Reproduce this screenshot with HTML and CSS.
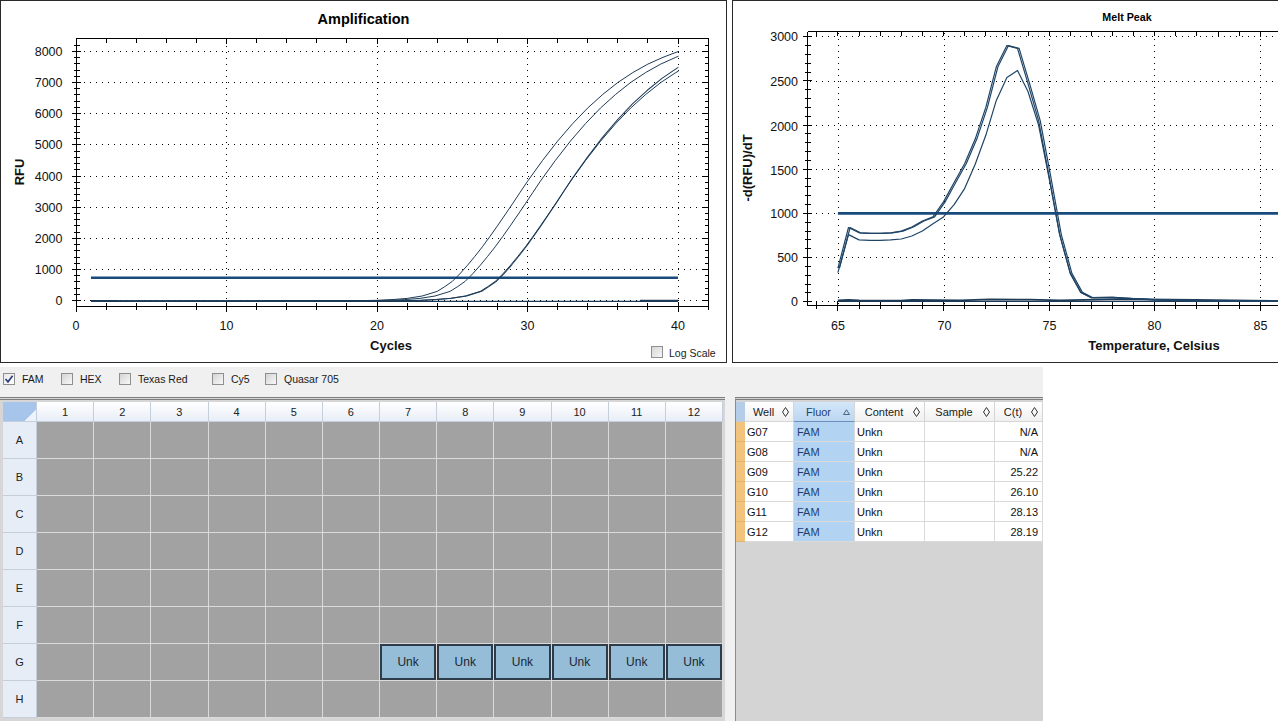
FILE: index.html
```html
<!DOCTYPE html>
<html>
<head>
<meta charset="utf-8">
<link rel="stylesheet" href="styles.css">
</head>
<body>
<div class="charts">
  <div class="panel amp">
    <svg class="chart" width="725" height="361" viewBox="1 1 725 361">
      <defs>
        <clipPath id="ampclip"><rect x="91" y="36" width="587.5" height="272"/></clipPath>
        <linearGradient id="cbg" x1="0" y1="0" x2="1" y2="1"><stop offset="0" stop-color="#d6d6d6"/><stop offset="1" stop-color="#f7f7f7"/></linearGradient>
        <path id="cA" d="M-60,301.2 L346.9,300.9 L377,300.3 L392,299.6 L407.1,298.4 L422.2,296 L437.2,291.4 L444.7,286.7 L452.3,281.4 L459.8,273.9 L467.3,265.5 L474.8,256.4 L482.4,246.8 L489.9,236.5 L497.4,225.9 L504.9,215 L512.5,203.8 L520,192.5 L527.5,181.3 L542.6,160.4 L557.6,141.1 L572.7,123.6 L587.7,108 L602.8,94.4 L617.8,82.5 L632.9,72.5 L647.9,64.1 L663,57.3 L678,51.6 L693,46.5 L708,42"/>
      </defs>
      <text class="ttl" x="363.5" y="24">Amplification</text>
      <g class="dots">
        <path d="M78,300.5H708 M78,269.5H708 M78,238.5H708 M78,207.5H708 M78,176.5H708 M78,144.5H708 M78,113.5H708 M78,82.5H708 M78,51.5H708"/>
        <path d="M226.5,40V306 M377.5,40V306 M527.5,40V306 M678.5,40V306"/>
      </g>
      <g class="ticks">
        <rect x="76.5" y="38.5" width="632" height="268" fill="none"/>
        <line x1="76.5" y1="301.2" x2="76.5" y2="39" stroke-width="6" stroke-dasharray="1 5.234"/>
        <line x1="76" y1="301.2" x2="76" y2="39" stroke-width="9" stroke-dasharray="1 30.17"/>
        <line x1="706.5" y1="301.2" x2="706.5" y2="39" stroke-width="4" stroke-dasharray="1 5.234"/>
        <line x1="705.5" y1="301.2" x2="705.5" y2="39" stroke-width="6" stroke-dasharray="1 30.17"/>
        <line x1="75.5" y1="306.5" x2="709" y2="306.5" stroke-width="7" stroke-dasharray="1 29.1"/>
        <line x1="75.5" y1="307" x2="709" y2="307" stroke-width="10" stroke-dasharray="1 149.5"/>
        <line x1="75.5" y1="40.5" x2="709" y2="40.5" stroke-width="4" stroke-dasharray="1 29.1"/>
        <line x1="75.5" y1="41" x2="709" y2="41" stroke-width="6" stroke-dasharray="1 149.5"/>
      </g>
      <g class="lbl ylbl">
        <text x="62.5" y="55.8">8000</text>
        <text x="62.5" y="87">7000</text>
        <text x="62.5" y="118.2">6000</text>
        <text x="62.5" y="149.4">5000</text>
        <text x="62.5" y="180.5">4000</text>
        <text x="62.5" y="211.7">3000</text>
        <text x="62.5" y="242.9">2000</text>
        <text x="62.5" y="274">1000</text>
        <text x="62.5" y="305.2">0</text>
      </g>
      <g class="lbl xlbl">
        <text x="76" y="330">0</text>
        <text x="226.5" y="330">10</text>
        <text x="377" y="330">20</text>
        <text x="527.5" y="330">30</text>
        <text x="678" y="330">40</text>
      </g>
      <text class="axt" x="391" y="350">Cycles</text>
      <text class="axt" transform="translate(23.5,172) rotate(-90)">RFU</text>
      <line class="thr" x1="91" y1="277.7" x2="678" y2="277.7"/>
      <path class="base" d="M91,301.4H678"/>
      <path class="base thick" d="M91,300.9H118 M265,300.9H380 M640,300.6H678"/>
      <g class="curves" clip-path="url(#ampclip)">
        <use href="#cA"/>
        <use href="#cA" transform="translate(12.8,0)"/>
        <use href="#cA" transform="translate(43,0)"/>
        <use href="#cA" transform="translate(44.5,301) scale(1,1.02) translate(0,-301)"/>
      </g>
      <rect x="651.5" y="346.5" width="11" height="11" fill="url(#cbg)" stroke="#8f8f8f"/>
      <text class="ls" x="669" y="357">Log Scale</text>
    </svg>
  </div>
  <div class="panel melt">
    <svg class="chart" width="545" height="361" viewBox="733 1 545 361">
      <text class="ttl small" x="1127" y="21">Melt Peak</text>
      <g class="dots">
        <path d="M810,301.5H1278 M810,257.5H1278 M810,213.5H1278 M810,169.5H1278 M810,125.5H1278 M810,81.5H1278 M810,36.5H1278"/>
        <path d="M838.5,33V305 M944.5,33V305 M1049.5,33V305 M1154.5,33V305 M1260.5,33V305"/>
      </g>
      <g class="ticks">
        <path d="M807.5,31.5H1290 M807.5,31.5V305.5 M807.5,305.5H1290" fill="none"/>
        <line x1="807.5" y1="302.2" x2="807.5" y2="32" stroke-width="6" stroke-dasharray="1 7.83"/>
        <line x1="807" y1="302.2" x2="807" y2="32" stroke-width="9" stroke-dasharray="1 43.15"/>
        <line x1="816.3" y1="305.5" x2="1290" y2="305.5" stroke-width="7" stroke-dasharray="1 20.12"/>
        <line x1="837.4" y1="306" x2="1290" y2="306" stroke-width="10" stroke-dasharray="1 104.6"/>
        <line x1="816.3" y1="33.5" x2="1290" y2="33.5" stroke-width="4" stroke-dasharray="1 20.12"/>
      </g>
      <g class="lbl ylbl">
        <text x="798" y="41.3">3000</text>
        <text x="798" y="86">2500</text>
        <text x="798" y="130.6">2000</text>
        <text x="798" y="174.7">1500</text>
        <text x="798" y="218">1000</text>
        <text x="798" y="262">500</text>
        <text x="798" y="306.2">0</text>
      </g>
      <g class="lbl xlbl">
        <text x="838" y="330">65</text>
        <text x="944.5" y="330">70</text>
        <text x="1049.5" y="330">75</text>
        <text x="1154.5" y="330">80</text>
        <text x="1260.5" y="330">85</text>
      </g>
      <text class="axt" x="1154" y="349.5">Temperature, Celsius</text>
      <text class="axt" transform="translate(751.5,168) rotate(-90)">-d(RFU)/dT</text>
      <line class="thr" x1="837.9" y1="213.4" x2="1290" y2="213.4"/>
      <path class="base" d="M837.9,301.3H1290"/>
      <path class="base thick" d="M837.9,300.5 L848.5,299.8 L859,300.4 L901,300.6 L912,300 L960,300.3 L990,299.4 L1030,299.6 L1060,300.4 L1120,299.2 L1195,300 L1290,301"/>
      <g class="curves melt-c">
        <path d="M837.9,268.1 L848.5,227.5 L859,232.8 L869.6,233.3 L880.1,233.3 L890.7,232.8 L901.3,231.1 L911.8,227 L922.4,221 L933,216.9 L943.5,201.9 L954.1,182.5 L964.6,163.7 L975.2,139.1 L985.8,107.4 L996.3,66.8 L1006.9,45.6 L1017.5,48.3 L1028,83.6 L1038.6,120.7 L1049.1,176.3 L1059.7,234.6 L1070.3,273.4 L1080.8,292.4 L1091.4,297.7 L1112.5,297.7 L1123.1,298.2 L1154.7,299.9 L1196.9,300.8 L1239.2,301.3 L1290,301.5"/>
        <path transform="translate(1.6,0)" d="M837.9,268.1 L848.5,227.5 L859,232.8 L869.6,233.3 L880.1,233.3 L890.7,232.8 L901.3,231.1 L911.8,227 L922.4,221 L933,216.9 L943.5,201.9 L954.1,182.5 L964.6,163.7 L975.2,139.1 L985.8,107.4 L996.3,66.8 L1006.9,45.6 L1017.5,48.3 L1028,83.6 L1038.6,120.7 L1049.1,176.3 L1059.7,234.6 L1070.3,273.4 L1080.8,292.4 L1091.4,297.7 L1112.5,297.7 L1123.1,298.2 L1154.7,299.9 L1196.9,300.8 L1239.2,301.3 L1290,301.5"/>
        <path d="M837.9,272.6 L848.5,234.6 L859,239.9 L869.6,240.3 L880.1,240.3 L890.7,239.9 L901.3,239 L911.8,236 L922.4,231 L933,223.8 L943.5,216.9 L954.1,204.6 L964.6,188.6 L975.2,164.2 L985.8,135.3 L996.3,100.4 L1006.9,77.4 L1017.5,70.4 L1028,91.5 L1038.6,125.1 L1049.1,178.1 L1059.7,234.6 L1070.3,273.4 L1080.8,292.4 L1091.4,297.7 L1112.5,297.2 L1123.1,298 L1154.7,299.5 L1196.9,300.6 L1290,301.3"/>
      </g>
    </svg>
  </div>
</div>

<div class="bar">
  <label class="opt"><span class="cb on"><svg width="10" height="10" viewBox="0 0 10 10"><path d="M1.5 5 L4 7.8 L8.6 1.8"/></svg></span>FAM</label>
  <label class="opt"><span class="cb"></span>HEX</label>
  <label class="opt"><span class="cb"></span>Texas Red</label>
  <label class="opt"><span class="cb"></span>Cy5</label>
  <label class="opt"><span class="cb"></span>Quasar 705</label>
</div>

<div class="lower">
  <div class="plate">
    <div class="grid">
      <div class="corner"></div>
      <div class="hd">1</div><div class="hd">2</div><div class="hd">3</div><div class="hd">4</div><div class="hd">5</div><div class="hd">6</div><div class="hd">7</div><div class="hd">8</div><div class="hd">9</div><div class="hd">10</div><div class="hd">11</div><div class="hd">12</div>
      <div class="rh">A</div><div class="w"></div><div class="w"></div><div class="w"></div><div class="w"></div><div class="w"></div><div class="w"></div><div class="w"></div><div class="w"></div><div class="w"></div><div class="w"></div><div class="w"></div><div class="w"></div>
      <div class="rh">B</div><div class="w"></div><div class="w"></div><div class="w"></div><div class="w"></div><div class="w"></div><div class="w"></div><div class="w"></div><div class="w"></div><div class="w"></div><div class="w"></div><div class="w"></div><div class="w"></div>
      <div class="rh">C</div><div class="w"></div><div class="w"></div><div class="w"></div><div class="w"></div><div class="w"></div><div class="w"></div><div class="w"></div><div class="w"></div><div class="w"></div><div class="w"></div><div class="w"></div><div class="w"></div>
      <div class="rh">D</div><div class="w"></div><div class="w"></div><div class="w"></div><div class="w"></div><div class="w"></div><div class="w"></div><div class="w"></div><div class="w"></div><div class="w"></div><div class="w"></div><div class="w"></div><div class="w"></div>
      <div class="rh">E</div><div class="w"></div><div class="w"></div><div class="w"></div><div class="w"></div><div class="w"></div><div class="w"></div><div class="w"></div><div class="w"></div><div class="w"></div><div class="w"></div><div class="w"></div><div class="w"></div>
      <div class="rh">F</div><div class="w"></div><div class="w"></div><div class="w"></div><div class="w"></div><div class="w"></div><div class="w"></div><div class="w"></div><div class="w"></div><div class="w"></div><div class="w"></div><div class="w"></div><div class="w"></div>
      <div class="rh">G</div><div class="w"></div><div class="w"></div><div class="w"></div><div class="w"></div><div class="w"></div><div class="w"></div><div class="w unk">Unk</div><div class="w unk">Unk</div><div class="w unk">Unk</div><div class="w unk">Unk</div><div class="w unk">Unk</div><div class="w unk">Unk</div>
      <div class="rh">H</div><div class="w"></div><div class="w"></div><div class="w"></div><div class="w"></div><div class="w"></div><div class="w"></div><div class="w"></div><div class="w"></div><div class="w"></div><div class="w"></div><div class="w"></div><div class="w"></div>
    </div>
  </div>
  <div class="split"></div>
  <div class="wells">
    <div class="tbl">
      <div class="ind hdr"></div>
      <div class="th"><span class="t">Well</span><svg class="sg" width="7" height="10" viewBox="0 0 7 10"><path d="M3.5 0.5 L6.5 5 L3.5 9.5 L0.5 5Z"/></svg></div>
      <div class="th sel"><span class="t">Fluor</span><svg class="sg tri" width="7" height="6" viewBox="0 0 7 6"><path d="M3.5 0.8 L6.5 5.5 L0.5 5.5Z"/></svg></div>
      <div class="th"><span class="t">Content</span><svg class="sg" width="7" height="10" viewBox="0 0 7 10"><path d="M3.5 0.5 L6.5 5 L3.5 9.5 L0.5 5Z"/></svg></div>
      <div class="th"><span class="t">Sample</span><svg class="sg" width="7" height="10" viewBox="0 0 7 10"><path d="M3.5 0.5 L6.5 5 L3.5 9.5 L0.5 5Z"/></svg></div>
      <div class="th"><span class="t">C(t)</span><svg class="sg" width="7" height="10" viewBox="0 0 7 10"><path d="M3.5 0.5 L6.5 5 L3.5 9.5 L0.5 5Z"/></svg></div>

      <div class="ind"></div><div class="td">G07</div><div class="td fl">FAM</div><div class="td">Unkn</div><div class="td"></div><div class="td num">N/A</div>
      <div class="ind"></div><div class="td">G08</div><div class="td fl">FAM</div><div class="td">Unkn</div><div class="td"></div><div class="td num">N/A</div>
      <div class="ind"></div><div class="td">G09</div><div class="td fl">FAM</div><div class="td">Unkn</div><div class="td"></div><div class="td num">25.22</div>
      <div class="ind"></div><div class="td">G10</div><div class="td fl">FAM</div><div class="td">Unkn</div><div class="td"></div><div class="td num">26.10</div>
      <div class="ind"></div><div class="td">G11</div><div class="td fl">FAM</div><div class="td">Unkn</div><div class="td"></div><div class="td num">28.13</div>
      <div class="ind"></div><div class="td">G12</div><div class="td fl">FAM</div><div class="td">Unkn</div><div class="td"></div><div class="td num">28.19</div>
    </div>
  </div>
</div>
</body>
</html>
```

FILE: styles.css
```css
html, body {
  margin: 0;
  padding: 0;
  background: #ffffff;
}
body {
  width: 1278px;
  height: 721px;
  overflow: hidden;
  font-family: "Liberation Sans", Arial, sans-serif;
  color: #111;
}

/* ---------- charts ---------- */
.charts {
  display: flex;
  gap: 5px;
  height: 363px;
}
.panel {
  box-sizing: border-box;
  height: 363px;
  border: 1px solid #2a2a2a;
  background: #fff;
  overflow: hidden;
}
.amp { width: 727px; flex: none; }
.melt { flex: 1; border-right: none; }
.chart { display: block; }

.ttl {
  font: bold 14.5px "Liberation Sans", Arial, sans-serif;
  text-anchor: middle;
  fill: #000;
}
.ttl.small { font-size: 10.7px; }
.dots path {
  fill: none;
  stroke: #000;
  stroke-width: 1;
  stroke-dasharray: 1 5;
  shape-rendering: crispEdges;
}
.ticks line, .ticks rect, .ticks path {
  stroke: #000;
  shape-rendering: crispEdges;
}
.ticks rect, .ticks path { stroke-width: 1; }
.lbl text {
  font: 12.5px "Liberation Sans", Arial, sans-serif;
  fill: #111;
}
.ylbl text { text-anchor: end; }
.xlbl text { text-anchor: middle; }
.axt {
  font: bold 13px "Liberation Sans", Arial, sans-serif;
  text-anchor: middle;
  fill: #111;
}
.thr {
  stroke: #184b7d;
  stroke-width: 2.6;
}
.base {
  fill: none;
  stroke: #1d3b57;
  stroke-width: 1.2;
}
.base.thick { stroke-width: 1.8; }
.curves use, .curves path {
  fill: none;
  stroke: #1d3b57;
  stroke-width: 1;
  stroke-linejoin: round;
}
.melt-c path { stroke: #1f4466; stroke-width: 1.2; }
.ls {
  font: 10.5px "Liberation Sans", Arial, sans-serif;
  fill: #222;
}

/* ---------- dye bar ---------- */
.bar {
  margin-top: 4px;
  width: 1043px;
  height: 30px;
  box-sizing: border-box;
  background: #f0f0f0;
  padding: 6px 0 0 3px;
  display: grid;
  grid-template-columns: 58px 58px 93px 53px auto;
  align-items: start;
  font-size: 10.5px;
  color: #1a1a1a;
}
.opt {
  display: flex;
  align-items: center;
  height: 12px;
  white-space: nowrap;
}
.cb {
  width: 12px;
  height: 12px;
  box-sizing: border-box;
  border: 1px solid #8e8f8f;
  background: linear-gradient(135deg, #d4d4d4, #f8f8f8);
  margin-right: 7px;
  display: flex;
  align-items: center;
  justify-content: center;
  flex: none;
}
.cb.on { background: linear-gradient(135deg, #e8e8e8, #ffffff); }
.cb svg path {
  fill: none;
  stroke: #2c3f7a;
  stroke-width: 1.7;
}

/* ---------- lower area ---------- */
.lower {
  display: flex;
  width: 1043px;
  height: 324px;
}
.plate {
  width: 725px;
  flex: none;
  box-sizing: border-box;
  border-top: 3px double #7d7d7d;
  padding: 2px 2px 0 3px;
  background: #d6d6d6;
  overflow: hidden;
}
.grid {
  display: grid;
  grid-template-columns: 34px repeat(12, 1fr);
  grid-template-rows: 20px repeat(8, 37px);
  font-size: 11px;
  color: #222;
}
.grid > div {
  box-sizing: border-box;
  display: flex;
  align-items: center;
  justify-content: center;
}
.corner {
  background: linear-gradient(315deg, #eef3fb 0, #eef3fb 8px, transparent 8px), #a7c5ea;
  border-right: 1px solid #c5cfdc;
  border-bottom: 1px solid #c5cfdc;
}
.hd {
  background: linear-gradient(#ffffff, #e8eef7);
  border-right: 1px solid #c5cfdc;
  border-bottom: 1px solid #c5cfdc;
}
.rh {
  background: #e6edf7;
  border-right: 1px solid #c5cfdc;
  border-bottom: 1px solid #c5cfdc;
}
.w {
  background: #a2a2a2;
  border-right: 1px solid #dadada;
  border-bottom: 1px solid #dadada;
}
.w.unk {
  background: #95bdd7;
  box-shadow: inset 0 0 0 2px #2d3c48;
  color: #1a2633;
  font-size: 12px;
}
.split {
  width: 10px;
  flex: none;
  background: #f0f0f0;
}
.wells {
  width: 308px;
  flex: none;
  box-sizing: border-box;
  border-top: 3px double #7d7d7d;
  border-left: 1px solid #8c8c8c;
  padding-top: 2px;
  background: #d4d4d4;
}
.tbl {
  display: grid;
  grid-template-columns: 9px 49px 61px 70px 70px 48px;
  grid-auto-rows: 20px;
  font-size: 11px;
  color: #111;
  background: #fff;
}
.tbl > div {
  box-sizing: border-box;
  display: flex;
  align-items: center;
}
.ind {
  background: #f2c37d;
  border-bottom: 1px solid #e2b46e;
}
.ind.hdr {
  background: #b6cde9;
  border-bottom: 1px solid #c9c9c9;
}
.th {
  background: linear-gradient(#ffffff, #f0f0f0);
  border-right: 1px solid #d5d5d5;
  border-bottom: 1px solid #d5d5d5;
  padding-right: 4px;
  color: #1a1a1a;
}
.th.sel {
  background: linear-gradient(#d3e6f8, #bcd7f2);
  border-bottom: 1px solid #6d8fb9;
  color: #1f3f6e;
}
.th .t {
  flex: 1;
  text-align: center;
}
.sg { flex: none; }
.sg path {
  fill: none;
  stroke: #333;
  stroke-width: 1;
}
.sg.tri path { stroke: #4b6585; }
.td {
  padding-left: 2px;
  border-right: 1px solid #dadada;
  border-bottom: 1px solid #dadada;
  background: #fff;
  white-space: nowrap;
}
.td.fl {
  background: #b3d3f3;
  color: #1f3f6e;
  padding-left: 3px;
}
.td.num {
  justify-content: flex-end;
  padding-right: 4px;
}
```
